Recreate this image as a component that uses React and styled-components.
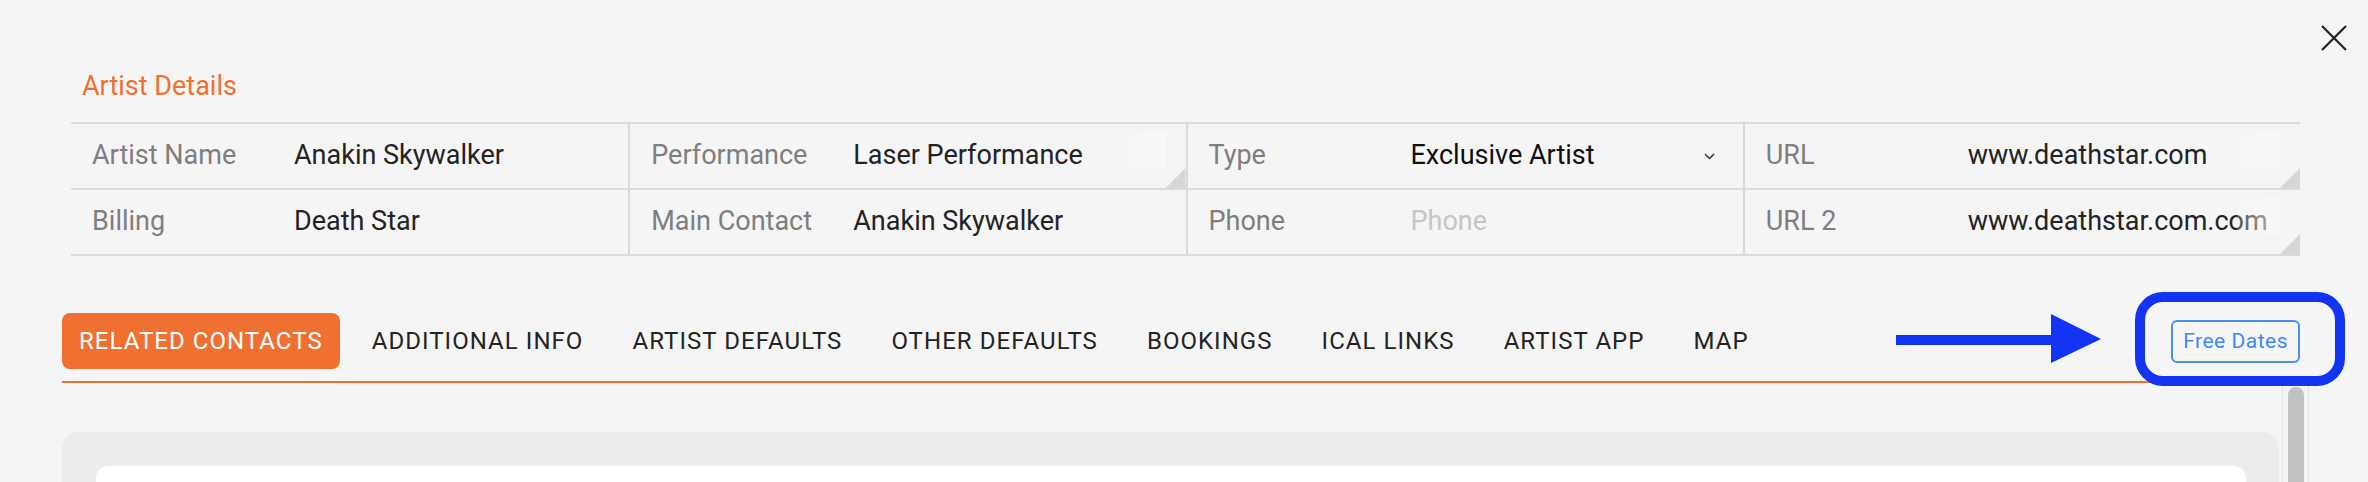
import React from 'react';
import styled, { createGlobalStyle } from 'styled-components';

const GlobalStyle = createGlobalStyle`
  html, body { margin: 0; padding: 0; background: #f5f5f5; }
  body { font-family: Roboto, "Noto Sans", "Liberation Sans", sans-serif; }
  * { box-sizing: border-box; }
`;

const ORANGE = '#ef7030';

const Modal = styled.div`
  position: relative;
  width: 2368px;
  height: 482px;
  overflow: hidden;
  background: #f5f5f5;
  padding: 25px 59px 0 62px;
  display: flex;
  flex-direction: column;
`;

const CloseButton = styled.button`
  position: absolute;
  top: 25px;
  right: 21px;
  width: 26px;
  height: 26px;
  padding: 0;
  border: 0;
  background: transparent;
  display: flex;
`;

const Title = styled.h2`
  margin: 45px 0 0 20px;
  font-size: 27px;
  line-height: 32px;
  font-weight: 400;
  color: ${ORANGE};
`;

const DetailsGrid = styled.div`
  margin: 20px 9px 0;
  display: grid;
  grid-template-columns: repeat(4, 1fr);
  border-top: 2px solid #dadada;
`;

const Cell = styled.div`
  height: 66px;
  display: flex;
  align-items: center;
  padding-left: 21px;
  border-bottom: 2px solid #dadada;
  border-left: ${p => (p.$first ? '0' : '2px solid #dadada')};
  font-size: 27px;
  line-height: 36px;
  min-width: 0;
`;

const Label = styled.span`
  width: 202px;
  flex-shrink: 0;
  color: #7e7e7e;
  padding-bottom: 2px;
  white-space: nowrap;
`;

const Value = styled.span`
  flex: 1;
  min-width: 0;
  color: ${p => (p.$placeholder ? '#c5c5c5' : p.$strong ? '#0f0f0f' : '#232323')};
  padding-bottom: 2px;
  white-space: nowrap;
  overflow: hidden;
`;

const AreaValue = styled.div`
  position: relative;
  flex: 1;
  align-self: stretch;
  display: flex;
  align-items: center;
  min-width: 0;
`;

const Fade = styled.span`
  position: absolute;
  top: 8px;
  right: 20px;
  width: 43px;
  height: 36px;
  background: linear-gradient(90deg, rgba(249, 249, 249, 0.2), rgba(249, 249, 249, 0.75));
`;

const Grip = styled.span`
  position: absolute;
  right: 0;
  bottom: 0;
  width: 20px;
  height: 20px;
  background: #d6d6d6;
  clip-path: polygon(100% 0, 100% 100%, 0 100%);
`;

const SelectValue = styled.div`
  flex: 1;
  display: flex;
  align-items: center;
  justify-content: space-between;
  padding-right: 28px;
  min-width: 0;
`;

const TabRow = styled.div`
  margin: 57px 9px 0 0;
  display: flex;
  align-items: center;
  justify-content: space-between;
  padding-bottom: 12px;
  border-bottom: 2px solid ${ORANGE};
`;

const Tabs = styled.div`
  display: flex;
  align-items: center;
  gap: 15px;
`;

const Tab = styled.button`
  height: 56px;
  padding: 0 17px;
  border: 0;
  border-radius: 8px;
  font-family: Roboto, "Noto Sans", sans-serif;
  font-size: 24px;
  letter-spacing: 1.05px;
  text-transform: uppercase;
  background: ${p => (p.$active ? ORANGE : 'transparent')};
  color: ${p => (p.$active ? '#ffffff' : '#232323')};
  white-space: nowrap;
`;

const FreeDates = styled.button`
  height: 43px;
  padding: 0 10px;
  border: 2px solid #4a8ff4;
  border-radius: 6px;
  background: transparent;
  color: #3f89f4;
  font-family: Roboto, "Noto Sans", sans-serif;
  font-size: 21px;
  letter-spacing: 0.5px;
`;

const ScrollArea = styled.div`
  flex: 1;
  margin-top: 3px;
  display: flex;
  gap: 3px;
  min-height: 0;
`;

const Panel = styled.div`
  flex: 1;
  margin-top: 46px;
  background: #ececec;
  border-radius: 16px 16px 0 0;
  padding: 34px 33px 0 34px;
  display: flex;
`;

const Card = styled.div`
  flex: 1;
  background: #ffffff;
  border-radius: 12px 12px 0 0;
`;

const Track = styled.div`
  width: 27px;
  border-left: 1px solid #e4e4e4;
  border-right: 1px solid #e4e4e4;
  display: flex;
  justify-content: center;
  padding-top: 1px;
`;

const Thumb = styled.div`
  width: 16px;
  background: #c1c1c1;
  border-radius: 8px 8px 0 0;
`;

const Highlight = styled.div`
  position: absolute;
  left: 2135px;
  top: 292px;
  width: 210px;
  height: 94px;
  border: 10px solid #1235f3;
  border-radius: 28px;
  pointer-events: none;
`;

const Arrow = styled.svg`
  position: absolute;
  left: 1896px;
  top: 314px;
`;

const Chevron = () => (
  <svg width="11" height="7" viewBox="0 0 11 7" fill="none">
    <path d="M1 1l4.5 4.5L10 1" stroke="#333" strokeWidth="1.5" />
  </svg>
);

const tabs = [
  'Related Contacts',
  'Additional Info',
  'Artist Defaults',
  'Other Defaults',
  'Bookings',
  'iCal Links',
  'Artist App',
  'Map',
];

export default function App() {
  return (
    <>
      <GlobalStyle />
      <Modal>
        <CloseButton aria-label="close">
          <svg width="26" height="26" viewBox="0 0 26 26">
            <path d="M1 1L25 25M25 1L1 25" stroke="#222" strokeWidth="2.2" />
          </svg>
        </CloseButton>

        <Title>Artist Details</Title>

        <DetailsGrid>
          <Cell $first>
            <Label>Artist Name</Label>
            <Value>Anakin Skywalker</Value>
          </Cell>
          <Cell>
            <Label>Performance</Label>
            <AreaValue>
              <Value>Laser Performance</Value>
              <Fade />
              <Grip />
            </AreaValue>
          </Cell>
          <Cell>
            <Label>Type</Label>
            <SelectValue>
              <Value $strong>Exclusive Artist</Value>
              <Chevron />
            </SelectValue>
          </Cell>
          <Cell>
            <Label>URL</Label>
            <AreaValue>
              <Value>www.deathstar.com</Value>
              <Fade />
              <Grip />
            </AreaValue>
          </Cell>

          <Cell $first>
            <Label>Billing</Label>
            <Value>Death Star</Value>
          </Cell>
          <Cell>
            <Label>Main Contact</Label>
            <Value>Anakin Skywalker</Value>
          </Cell>
          <Cell>
            <Label>Phone</Label>
            <Value $placeholder>Phone</Value>
          </Cell>
          <Cell>
            <Label>URL 2</Label>
            <AreaValue>
              <Value>www.deathstar.com.com</Value>
              <Fade />
              <Grip />
            </AreaValue>
          </Cell>
        </DetailsGrid>

        <TabRow>
          <Tabs>
            {tabs.map((t, i) => (
              <Tab key={t} $active={i === 0}>
                {t}
              </Tab>
            ))}
          </Tabs>
          <FreeDates>Free Dates</FreeDates>
        </TabRow>

        <ScrollArea>
          <Panel>
            <Card />
          </Panel>
          <Track>
            <Thumb />
          </Track>
        </ScrollArea>

        <Arrow width="205" height="50" viewBox="0 0 205 50">
          <rect x="0" y="21" width="157" height="10" fill="#1235f3" />
          <polygon points="155,0 205,25 155,49" fill="#1235f3" />
        </Arrow>
        <Highlight />
      </Modal>
    </>
  );
}
